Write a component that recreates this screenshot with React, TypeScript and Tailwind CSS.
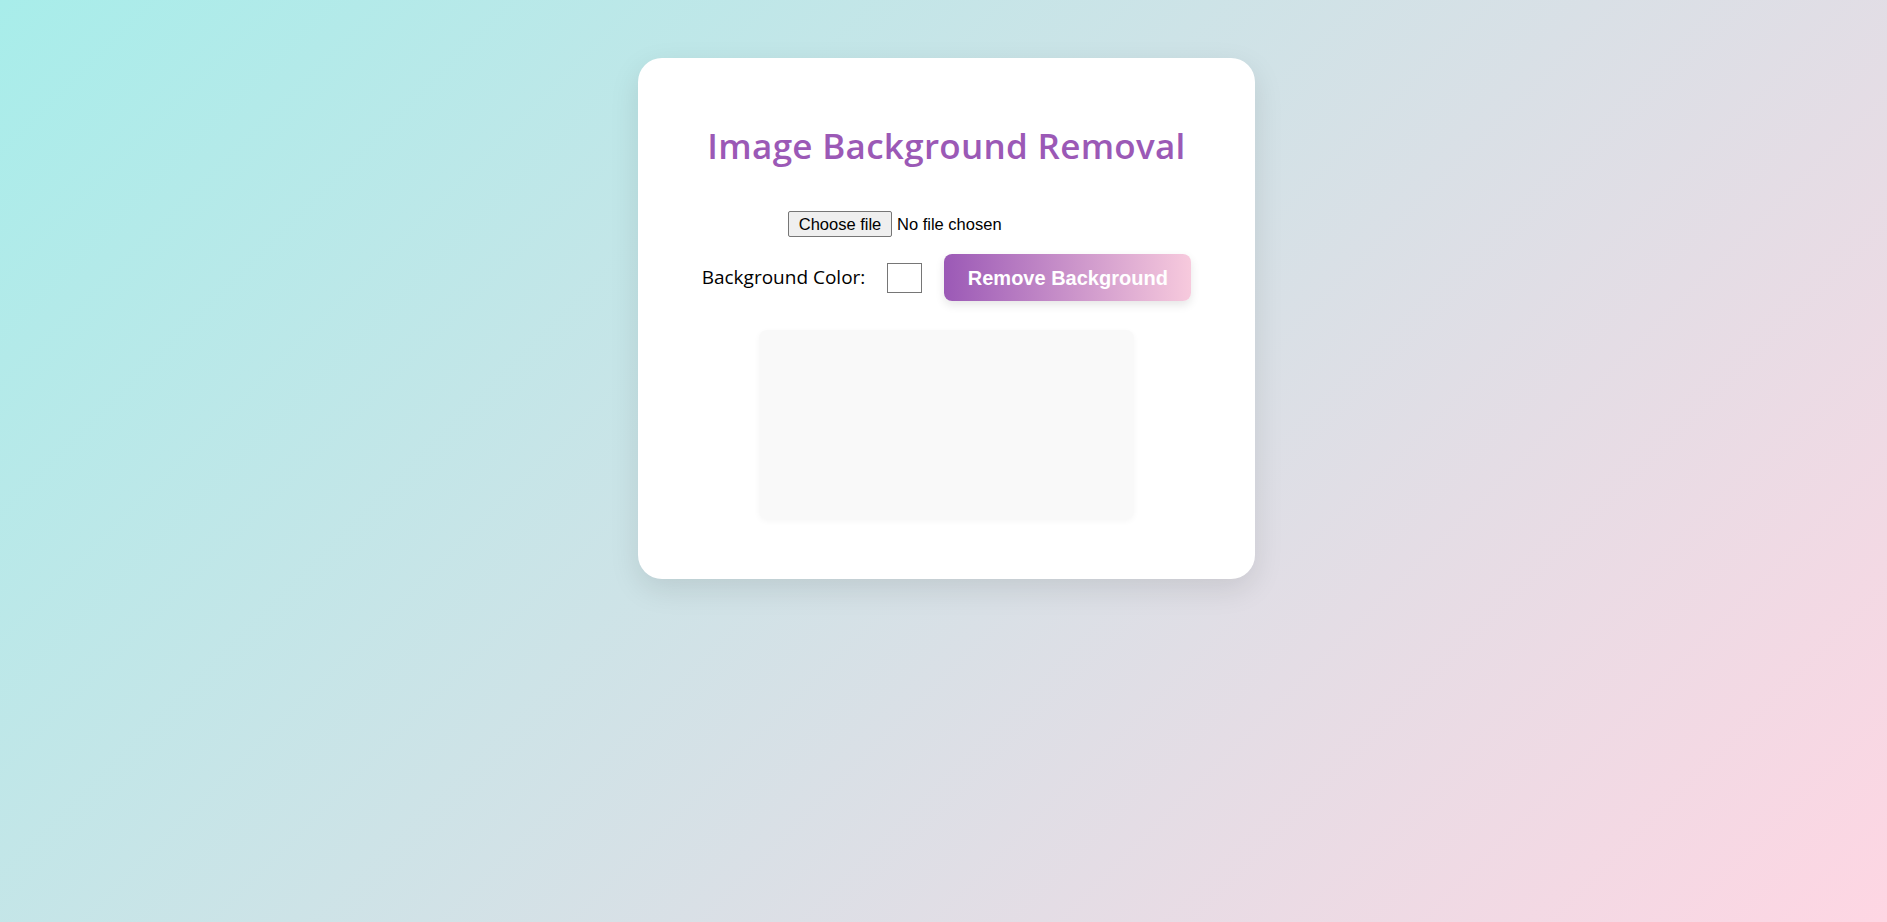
export default function App() {
  return (
    <div className="min-h-screen w-full bg-[linear-gradient(135deg,#a8edea_0%,#fed6e3_100%)] flex justify-center items-start pl-[6px]">
      {/* Card */}
      <div className="mt-[58px] w-[617px] bg-white rounded-[24px] shadow-[0_10px_30px_rgba(0,0,0,0.1)] flex flex-col items-center pt-[68px] pb-[60px]">
        <h1
          className="text-[#9b59b6] text-[35px] leading-[40px] font-semibold tracking-[0.3px]"
          style={{ fontFamily: '"Open Sans", "Noto Sans", sans-serif' }}
        >
          Image Background Removal
        </h1>

        {/* File input */}
        <label
          className="self-start ml-[150px] mt-[45px] flex items-center gap-[5px] text-[16.5px] text-black cursor-pointer"
          style={{ fontFamily: '"Liberation Sans", Arial, sans-serif' }}
        >
          <input type="file" accept="image/*" className="hidden" />
          <span className="h-[26px] w-[104px] flex items-center justify-center bg-[#efefef] border border-[#767676] rounded-[2px]">
            Choose file
          </span>
          <span>No file chosen</span>
        </label>

        {/* Color + button */}
        <div className="mt-[17px] flex items-center gap-[22px]">
          <label
            className="text-[19px] text-black"
            style={{ fontFamily: '"Open Sans", "Noto Sans", sans-serif' }}
          >
            Background Color:
          </label>
          <div className="w-[35px] h-[30px] border border-[#767676] bg-white" />
          <button
            className="h-[47px] w-[247px] rounded-[8px] bg-[linear-gradient(to_right,#9b59b6,#f7cadd)] text-white text-[20px] font-bold shadow-[0_4px_10px_rgba(0,0,0,0.1)]"
            style={{ fontFamily: '"Liberation Sans", Arial, sans-serif' }}
          >
            Remove Background
          </button>
        </div>

        {/* Preview */}
        <div className="mt-[29px] w-[375px] h-[189px] rounded-[8px] bg-[#f9f9f9] shadow-[0_2px_6px_rgba(0,0,0,0.04)]" />
      </div>
    </div>
  );
}
